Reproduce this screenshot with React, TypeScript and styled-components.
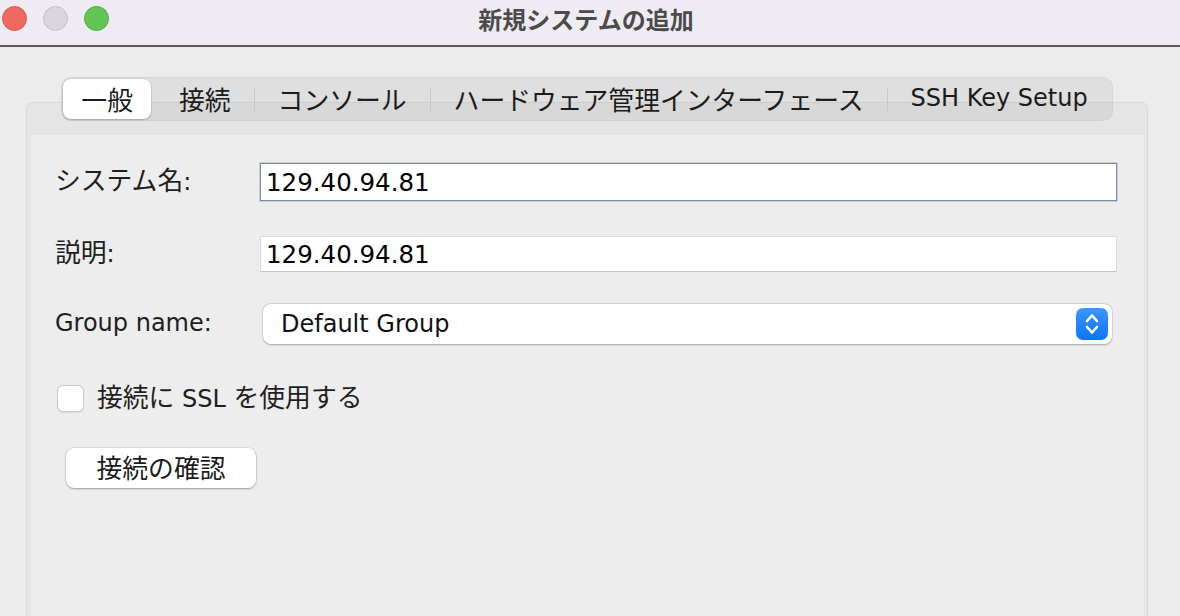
import React from 'react';
import styled, {createGlobalStyle} from 'styled-components';

const GlobalStyle = createGlobalStyle`
  html, body {
    margin: 0;
    padding: 0;
    background: #ececec;
    overflow: hidden;
  }
  body {
    font-family: "DejaVu Sans", "Noto Sans CJK JP", sans-serif;
    color: #1f1f1f;
  }
`;

const Window = styled.div`
  display: flex;
  flex-direction: column;
  width: 1180px;
  height: 616px;
  background: #ececec;
`;

const TitleBar = styled.div`
  display: grid;
  grid-template-columns: 1fr auto 1fr;
  align-items: center;
  height: 36px;
  padding-bottom: 9px;
  background: #eeebf2;
  border-bottom: 2px solid #5a5a5a;
`;

const Lights = styled.div`
  display: flex;
  gap: 16px;
  padding-left: 2px;
`;

const Light = styled.span<{$fill: string; $edge: string}>`
  width: 23px;
  height: 23px;
  border-radius: 50%;
  background: ${(p) => p.$fill};
  border: 0.5px solid ${(p) => p.$edge};
`;

const Title = styled.div`
  font-family: "Noto Sans CJK JP", sans-serif;
  font-size: 24px;
  font-weight: 700;
  color: #4b4b4b;
  margin-left: -8px;
`;

const Body = styled.div`
  flex: 1;
  display: flex;
  flex-direction: column;
  align-items: center;
  padding: 30px 32px 0 26px;
  min-height: 0;
`;

const Ja = styled.span`
  font-size: 1.075em;
`;

const TabBar = styled.div`
  position: relative;
  z-index: 1;
  display: flex;
  align-items: center;
  height: 42px;
  padding: 0 1px;
  margin-bottom: -19px;
  border-radius: 10px;
  background: rgba(0, 0, 0, 0.055);
  border: 1px solid rgba(0, 0, 0, 0.035);
  font-size: 24px;
  color: #1c1c1c;
`;

const Tab = styled.div<{$active?: boolean}>`
  display: flex;
  align-items: center;
  height: 38px;
  padding: 0 ${(p) => (p.$active ? 18 : 23)}px 2px;
  border-radius: 8px;
  white-space: nowrap;
  background: ${(p) => (p.$active ? '#ffffff' : 'transparent')};
  box-shadow: ${(p) =>
    p.$active ? '0 1px 2px rgba(0,0,0,0.22), 0 0 0 0.5px rgba(0,0,0,0.08)' : 'none'};
`;

const TabDivider = styled.span<{$hidden?: boolean}>`
  width: 1px;
  height: 23px;
  margin: 0 ${(p) => (p.$hidden ? 2 : 0)}px;
  background: ${(p) => (p.$hidden ? 'transparent' : '#c7c7c7')};
`;

const Panel = styled.div`
  align-self: stretch;
  flex: 1;
  display: flex;
  flex-direction: column;
  padding: 32px 3px 0 4px;
  border: 1px solid #d9d9d9;
  border-bottom: none;
  border-radius: 7px 7px 0 0;
  background: #e5e5e5;
`;

const PanelInner = styled.div`
  flex: 1;
  display: flex;
  flex-direction: column;
  align-items: flex-start;
  padding: 28px 27px 0 24px;
  background: #ededed;
`;

const FormRow = styled.div<{$top: number}>`
  align-self: stretch;
  display: grid;
  grid-template-columns: 205px 1fr;
  align-items: center;
  margin-top: ${(p) => p.$top}px;
  font-size: 24px;
`;

const Label = styled.label`
  color: #1f1f1f;
  white-space: nowrap;
  line-height: 30px;
  padding-bottom: 2px;
`;

const TextField = styled.div<{$focused?: boolean}>`
  display: flex;
  align-items: center;
  height: ${(p) => (p.$focused ? 38 : 36)}px;
  box-sizing: border-box;
  padding: 0 5px;
  background: #ffffff;
  color: #000;
  font-size: 24.5px;
  border: 1px solid ${(p) => (p.$focused ? '#7d8ca2' : '#dcdcdc')};
  border-bottom-color: ${(p) => (p.$focused ? '#7d8ca2' : '#c4c4c4')};
  box-shadow: ${(p) => (p.$focused ? '0 0 0 0.5px rgba(125,140,162,0.6)' : 'none')};
`;

const Select = styled.div`
  display: flex;
  align-items: center;
  justify-content: space-between;
  height: 40px;
  margin: 0 5px 0 3px;
  padding: 0 4px 0 18px;
  border-radius: 8px;
  background: #ffffff;
  color: #111;
  box-shadow: 0 0.5px 2px rgba(0, 0, 0, 0.28), 0 0 0 0.5px rgba(0, 0, 0, 0.1);
`;

const Stepper = styled.span`
  display: flex;
  width: 32px;
  height: 32px;
  border-radius: 7px;
  background: linear-gradient(#3d95ff, #0b74f6);
`;

const CheckRow = styled.div`
  display: flex;
  align-items: center;
  gap: 13px;
  height: 28px;
  margin: 40px 0 0 2px;
  font-size: 24px;
  line-height: 28px;
`;

const Checkbox = styled.span`
  width: 25px;
  height: 25px;
  border-radius: 6px;
  background: #ffffff;
  border: 1px solid #cbcbcb;
  box-shadow: 0 0.5px 1px rgba(0, 0, 0, 0.08);
`;

const PushButton = styled.button`
  width: 190px;
  height: 40px;
  margin: 36px 0 0 11px;
  padding: 0 0 4px;
  border: none;
  border-radius: 8px;
  background: #ffffff;
  color: #1c1c1c;
  font-family: inherit;
  font-size: 24px;
  box-shadow: 0 1px 2px rgba(0, 0, 0, 0.3), 0 0 0 0.5px rgba(0, 0, 0, 0.12);
`;

const StepperIcon = () => (
  <svg width="32" height="32" viewBox="0 0 32 32" fill="none">
    <path
      d="M11 13 L16 7.5 L21 13 M11 19 L16 24.5 L21 19"
      stroke="#fff"
      strokeWidth="2.6"
      strokeLinecap="round"
      strokeLinejoin="round"
    />
  </svg>
);

const tabs = ['一般', '接続', 'コンソール', 'ハードウェア管理インターフェース'];

export default function App() {
  return (
    <>
      <GlobalStyle />
      <Window>
        <TitleBar>
          <Lights>
            <Light $fill="#ee6a5f" $edge="#d9594e" />
            <Light $fill="#d9d6dd" $edge="#c4c1c8" />
            <Light $fill="#62c554" $edge="#50ab43" />
          </Lights>
          <Title>新規システムの追加</Title>
          <div />
        </TitleBar>

        <Body>
          <TabBar>
            {tabs.map((t, i) => (
              <React.Fragment key={t}>
                <Tab $active={i === 0}>
                  <Ja>{t}</Ja>
                </Tab>
                <TabDivider $hidden={i === 0} />
              </React.Fragment>
            ))}
            <Tab>SSH Key Setup</Tab>
          </TabBar>

          <Panel>
            <PanelInner>
              <FormRow $top={0}>
                <Label>
                  <Ja>システム名</Ja>:
                </Label>
                <TextField $focused>129.40.94.81</TextField>
              </FormRow>
              <FormRow $top={35}>
                <Label>
                  <Ja>説明</Ja>:
                </Label>
                <TextField>129.40.94.81</TextField>
              </FormRow>
              <FormRow $top={32}>
                <Label>Group name:</Label>
                <Select>
                  Default Group
                  <Stepper>
                    <StepperIcon />
                  </Stepper>
                </Select>
              </FormRow>

              <CheckRow>
                <Checkbox />
                <span>
                  <Ja>接続に</Ja> SSL <Ja>を使用する</Ja>
                </span>
              </CheckRow>

              <PushButton>
                <Ja>接続の確認</Ja>
              </PushButton>
            </PanelInner>
          </Panel>
        </Body>
      </Window>
    </>
  );
}
